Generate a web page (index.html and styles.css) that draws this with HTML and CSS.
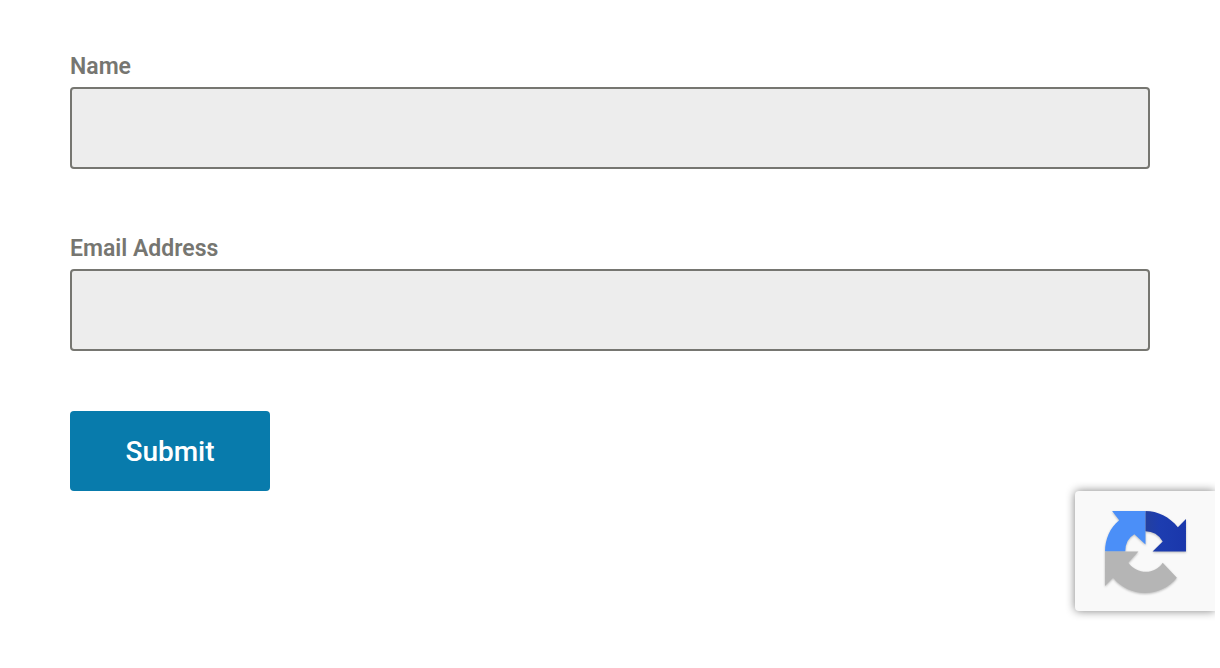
FILE: index.html
```html
<!DOCTYPE html>
<html lang="en">
<head>
    <meta charset="UTF-8">
    <meta name="viewport" content="width=device-width, initial-scale=1.0">
    <title>Contact Form</title>
    <link rel="stylesheet" href="styles.css">
</head>
<body>
    <form class="contact-form">
        <div class="field">
            <label for="name">Name</label>
            <input type="text" id="name" name="name">
        </div>
        <div class="field">
            <label for="email">Email Address</label>
            <input type="email" id="email" name="email">
        </div>
        <button type="submit" class="submit-button">Submit</button>
    </form>

    <!-- Badge stuck to the right edge -->
    <div class="badge">
        <svg class="badge-logo" viewBox="0 0 84 84" aria-hidden="true">
            <defs>
                <linearGradient id="navy" x1="0" y1="0" x2="1" y2="0">
                    <stop offset="0" stop-color="#24409f"/>
                    <stop offset="0.35" stop-color="#1d3db0"/>
                    <stop offset="1" stop-color="#1a37ab"/>
                </linearGradient>
            </defs>
            <path fill="#4b8ff8" d="M9 2H42V35L31 25Q22 30 22 42H2C2 30 7 18 16 11Z"/>
            <path fill="url(#navy)" d="M42 2C54 2 66 8 74 18L82 10V42H49L59 32Q53 22 42 22Z"/>
            <path fill="#b5b5b5" d="M2 42H35L25 53C34 65 51 65 59 53L73 68C58 87 27 89 10 68L2 76Z"/>
        </svg>
    </div>
</body>
</html>
```

FILE: styles.css
```css
* {
    box-sizing: border-box;
}

body {
    margin: 0;
    background-color: #fff;
    font-family: Roboto, Arial, sans-serif;
}

.contact-form {
    padding: 47px 70px;
}

.field {
    margin-bottom: 60px;
}

.field label {
    display: block;
    color: #767671;
    font-size: 23px;
    font-weight: 600;
    line-height: 40px;
}

.field input {
    display: block;
    width: 100%;
    height: 82px;
    padding: 16px 20px;
    border: 2px solid #767671;
    border-radius: 4px;
    background-color: #ededed;
    font: inherit;
    font-size: 23px;
}

.submit-button {
    display: block;
    width: 200px;
    height: 80px;
    border: none;
    border-radius: 4px;
    background-color: #087bac;
    color: #fff;
    font-family: inherit;
    font-size: 28px;
    font-weight: 500;
    cursor: pointer;
}

/* The shadow is cut off along the right edge */
.badge {
    position: fixed;
    right: 5px;
    bottom: 57px;
    display: flex;
    align-items: center;
    width: 140px;
    height: 120px;
    padding-left: 28px;
    border-radius: 4px 0 0 4px;
    background-color: #f9f9f9;
    box-shadow: 0 0 10px #808080;
    clip-path: inset(-20px 0 -20px -20px);
}

.badge-logo {
    width: 85px;
    height: 85px;
    filter: drop-shadow(0 1px 1px rgba(0, 0, 0, 0.25));
}
```
